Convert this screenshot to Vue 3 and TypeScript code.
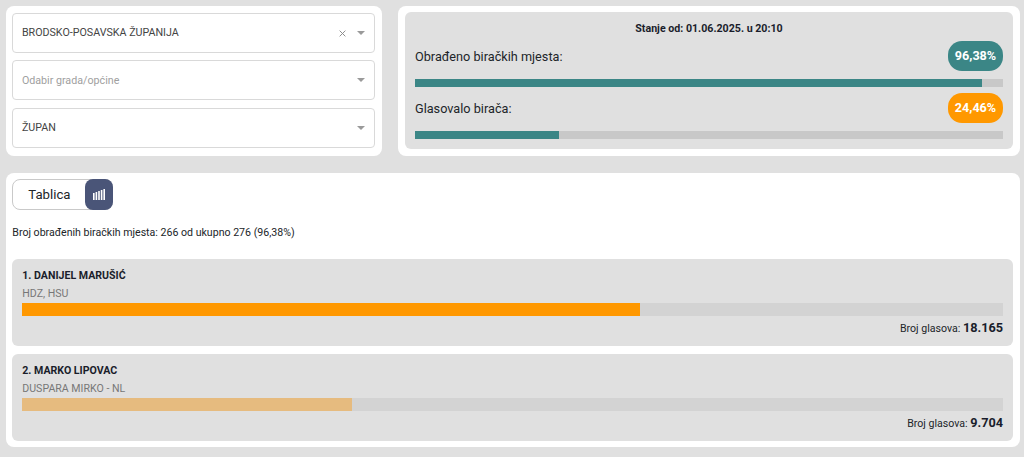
<script setup lang="ts">
interface Candidate {
  title: string;
  party: string;
  pct: number;
  votes: string;
  color: string;
}

const candidates: Candidate[] = [
  { title: '1. DANIJEL MARUŠIĆ', party: 'HDZ, HSU', pct: 63, votes: '18.165', color: '#ff9800' },
  { title: '2. MARKO LIPOVAC', party: 'DUSPARA MIRKO - NL', pct: 33.65, votes: '9.704', color: '#e6bb7f' },
];

const stats = [
  { label: 'Obrađeno biračkih mjesta:', value: '96,38%', pct: 96.38, badge: '#3b8686' },
  { label: 'Glasovalo birača:', value: '24,46%', pct: 24.46, badge: '#ff9800' },
];

const selects = [
  { text: 'BRODSKO-POSAVSKA ŽUPANIJA', placeholder: false, clear: true },
  { text: 'Odabir grada/općine', placeholder: true, clear: false },
  { text: 'ŽUPAN', placeholder: false, clear: false },
];
</script>

<template>
  <div class="page">
    <div class="top">
      <section class="card filters">
        <div v-for="s in selects" :key="s.text" class="select">
          <span class="select-text" :class="{ placeholder: s.placeholder }">{{ s.text }}</span>
          <svg v-if="s.clear" class="clear" width="7" height="7" viewBox="0 0 8 8">
            <path d="M0.7 0.7L7.3 7.3M7.3 0.7L0.7 7.3" stroke="#8a8a8a" stroke-width="1.1" fill="none" />
          </svg>
          <span class="caret"></span>
        </div>
      </section>
      <section class="card status-card">
        <div class="status">
          <div class="status-title">Stanje od: 01.06.2025. u 20:10</div>
          <div v-for="st in stats" :key="st.label" class="stat">
            <div class="stat-row">
              <span class="stat-label">{{ st.label }}</span>
              <span class="badge" :style="{ background: st.badge }">{{ st.value }}</span>
            </div>
            <div class="stat-track">
              <div class="stat-fill" :style="{ width: st.pct + '%' }"></div>
            </div>
          </div>
        </div>
      </section>
    </div>
    <section class="card results">
      <div class="toggle">
        <span class="toggle-label">Tablica</span>
        <span class="toggle-btn">
          <svg width="12" height="11" viewBox="0 0 12 11">
            <rect x="0" y="4" width="1.6" height="7" fill="#fff" />
            <rect x="2.6" y="3" width="1.6" height="8" fill="#fff" />
            <rect x="5.2" y="2" width="1.6" height="9" fill="#fff" />
            <rect x="7.8" y="1" width="1.6" height="10" fill="#fff" />
            <rect x="10.4" y="0" width="1.6" height="11" fill="#fff" />
          </svg>
        </span>
      </div>
      <p class="summary">Broj obrađenih biračkih mjesta: 266 od ukupno 276 (96,38%)</p>
      <div class="list">
        <article v-for="c in candidates" :key="c.title" class="candidate">
          <div class="cand-title">{{ c.title }}</div>
          <div class="cand-party">{{ c.party }}</div>
          <div class="cand-track">
            <div class="cand-fill" :style="{ width: c.pct + '%', background: c.color }"></div>
          </div>
          <div class="cand-votes">Broj glasova: <strong>{{ c.votes }}</strong></div>
        </article>
      </div>
    </section>
  </div>
</template>

<style>
html, body {
  margin: 0;
  background: #e0e0e0;
}
</style>

<style scoped>
.page {
  box-sizing: border-box;
  width: 1024px;
  height: 457px;
  padding: 6px 4px 0 6px;
  font-family: Roboto, "Liberation Sans", sans-serif;
  color: #212529;
  background: #e0e0e0;
  overflow: hidden;
}
.top {
  display: flex;
  gap: 16.3px;
  margin-bottom: 17px;
}
.card {
  background: #fff;
  border-radius: 8px;
  box-sizing: border-box;
}
.filters {
  width: 375.7px;
  height: 149.7px;
  padding: 6.7px 7px 0 6.3px;
  display: flex;
  flex-direction: column;
  gap: 7.3px;
}
.select {
  box-sizing: border-box;
  height: 40.2px;
  border: 1px solid #d9d9d9;
  border-radius: 4px;
  display: flex;
  align-items: center;
  padding: 0 8.7px 0 8.6px;
  font-size: 10.7px;
  color: #444;
}
.select-text {
  flex: 1;
}
.placeholder {
  color: #a0a0a0;
}
.clear {
  margin-right: 11px;
  margin-top: 1px;
}
.caret {
  width: 0;
  height: 0;
  border-left: 4px solid transparent;
  border-right: 4px solid transparent;
  border-top: 4px solid #9a9a9a;
}
.status-card {
  width: 622px;
  height: 149.7px;
  padding: 6.3px 7px 0;
}
.status {
  box-sizing: border-box;
  height: 136.7px;
  background: #e0e0e0;
  border-radius: 6px;
  padding: 8.7px 10px 0;
}
.status-title {
  text-align: center;
  font-size: 10.65px;
  font-weight: 700;
  line-height: 16px;
  margin-bottom: 4.3px;
  color: #1a1d2b;
}
.stat-row {
  display: flex;
  justify-content: space-between;
  align-items: center;
  height: 29.4px;
}
.stat-label {
  font-size: 12.7px;
  padding-top: 2px;
}
.badge {
  width: 55px;
  text-align: center;
  color: #fff;
  font-size: 12.6px;
  font-weight: 700;
  line-height: 29.4px;
  border-radius: 14px;
}
.stat-track {
  height: 8.6px;
  margin: 8px 0 6px;
  background: #c8c8c8;
}
.stat-fill {
  height: 100%;
  background: #3b8686;
}
.results {
  width: 1014px;
  height: 274.3px;
  padding: 6.3px 7.3px 0 6.3px;
}
.toggle {
  box-sizing: border-box;
  display: flex;
  align-items: center;
  justify-content: space-between;
  width: 101px;
  height: 30.7px;
  border: 1px solid #c9c9c9;
  border-radius: 8px;
}
.toggle-label {
  font-size: 13.2px;
  padding-left: 15px;
}
.toggle-btn {
  width: 28.6px;
  height: 30.7px;
  margin: -1px;
  background: #4a5578;
  border-radius: 8px;
  display: flex;
  align-items: center;
  justify-content: center;
}
.summary {
  margin: 15px 0 0;
  font-size: 10.6px;
  line-height: 16px;
  height: 34.6px;
}
.list {
  display: flex;
  flex-direction: column;
  gap: 8.6px;
}
.candidate {
  box-sizing: border-box;
  height: 86.4px;
  background: #e0e0e0;
  border-radius: 6px;
  padding: 10px 9.7px 0 10px;
}
.cand-title {
  font-size: 10.6px;
  font-weight: 700;
  line-height: 14px;
  color: #1a1d2b;
}
.cand-party {
  font-size: 10.6px;
  color: #777;
  line-height: 14px;
  margin-top: 3.6px;
}
.cand-track {
  height: 12.7px;
  margin-top: 2.4px;
  background: #d3d3d3;
}
.cand-fill {
  height: 100%;
}
.cand-votes {
  text-align: right;
  font-size: 10.6px;
  line-height: 16px;
  margin-top: 4.3px;
}
.cand-votes strong {
  font-size: 12.7px;
  font-weight: 700;
  color: #1a1d2b;
}
</style>
